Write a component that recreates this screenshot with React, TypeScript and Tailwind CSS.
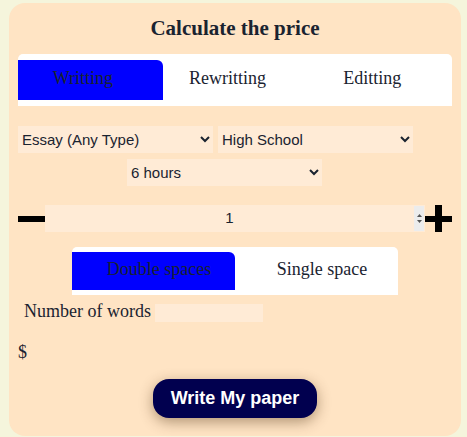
import React from "react";

export default function App() {
  const serif = { fontFamily: '"Liberation Serif", "Times New Roman", serif' };
  const sans = { fontFamily: '"Liberation Sans", Arial, sans-serif' };
  return (
    <div className="w-[467px] h-[437px] bg-[#f5f5dc] pt-[3px] pl-[9px] pr-[6px] overflow-hidden">
      <div className="bg-[#ffe4c4] rounded-[16px] h-[433px] px-[9px] flex flex-col text-[#1a2330]" style={serif}>
        <div className="h-[51px] flex items-center justify-center text-[21px] font-bold">Calculate the price</div>
        <div className="bg-white h-[52px] rounded-t-[5px] flex items-center">
          <div className="flex-1 h-[40px] bg-[#0000ff] rounded-tr-[6px] flex items-center justify-center pr-[15px] pb-[4px] text-[18px]">Writting</div>
          <div className="flex-1 h-[40px] flex items-center justify-center pr-[15px] pb-[4px] text-[18px]">Rewritting</div>
          <div className="flex-1 h-[40px] flex items-center justify-center pr-[15px] pb-[4px] text-[18px]">Editting</div>
        </div>
        <div className="mt-[20px] flex gap-[5px]" style={sans}>
          <select className="w-[195px] h-[27px] bg-[#ffebd6] text-[15px] text-[#1a2330] border-0 outline-none pl-0">
            <option>Essay (Any Type)</option>
          </select>
          <select className="w-[195px] h-[27px] bg-[#ffebd6] text-[15px] text-[#1a2330] border-0 outline-none pl-0">
            <option>High School</option>
          </select>
        </div>
        <div className="mt-[6px] pl-[109px]" style={sans}>
          <select className="w-[195px] h-[27px] bg-[#ffebd6] text-[15px] text-[#1a2330] border-0 outline-none pl-0">
            <option>6 hours</option>
          </select>
        </div>
        <div className="mt-[19px] flex items-center h-[27px]">
          <div className="w-[27px] h-[27px] flex items-center">
            <div className="w-[27px] h-[6px] bg-black" />
          </div>
          <div className="flex-1 h-[27px] bg-[#ffebd6] flex items-center relative" style={sans}>
            <div className="flex-1 text-center text-[15px] text-[#1a2330]">1</div>
            <div className="w-[10px] h-[25px] mr-[1px] bg-[#ececec] flex flex-col items-center justify-center gap-[3px]">
              <svg width="5" height="3" viewBox="0 0 5 3"><path d="M0 3L2.5 0L5 3z" fill="#555" /></svg>
              <svg width="5" height="3" viewBox="0 0 5 3"><path d="M0 0L2.5 3L5 0z" fill="#555" /></svg>
            </div>
          </div>
          <div className="w-[27px] h-[27px] relative">
            <div className="absolute left-0 top-[10.5px] w-[27px] h-[6px] bg-black" />
            <div className="absolute left-[10px] top-0 w-[7px] h-[27px] bg-black" />
          </div>
        </div>
        <div className="mt-[15px] flex justify-center">
          <div className="w-[326px] h-[48px] bg-white rounded-t-[5px] flex items-center text-[18px]">
            <div className="flex-1 h-[38px] bg-[#0000ff] rounded-tr-[6px] flex items-center justify-center pl-[11px] pb-[4px]">Double spaces</div>
            <div className="flex-1 h-[38px] flex items-center justify-center pl-[11px] pb-[4px]">Single space</div>
          </div>
        </div>
        <div className="mt-[9px] flex items-center pl-[6px] h-[18px] text-[18px]">
          <span className="leading-none mt-[-4px]">Number of words</span>
          <div className="ml-[4px] w-[108px] h-[18px] bg-[#ffebd6]" />
        </div>
        <div className="mt-[19px] text-[18px] leading-[22px]">$</div>
        <div className="mt-[16px] flex justify-center">
          <button className="w-[164px] h-[39px] rounded-[16px] bg-[#01004f] text-white text-[18px] font-bold shadow-[0_4px_14px_rgba(80,50,20,0.45)]" style={sans}>
            Write My paper
          </button>
        </div>
      </div>
    </div>
  );
}
